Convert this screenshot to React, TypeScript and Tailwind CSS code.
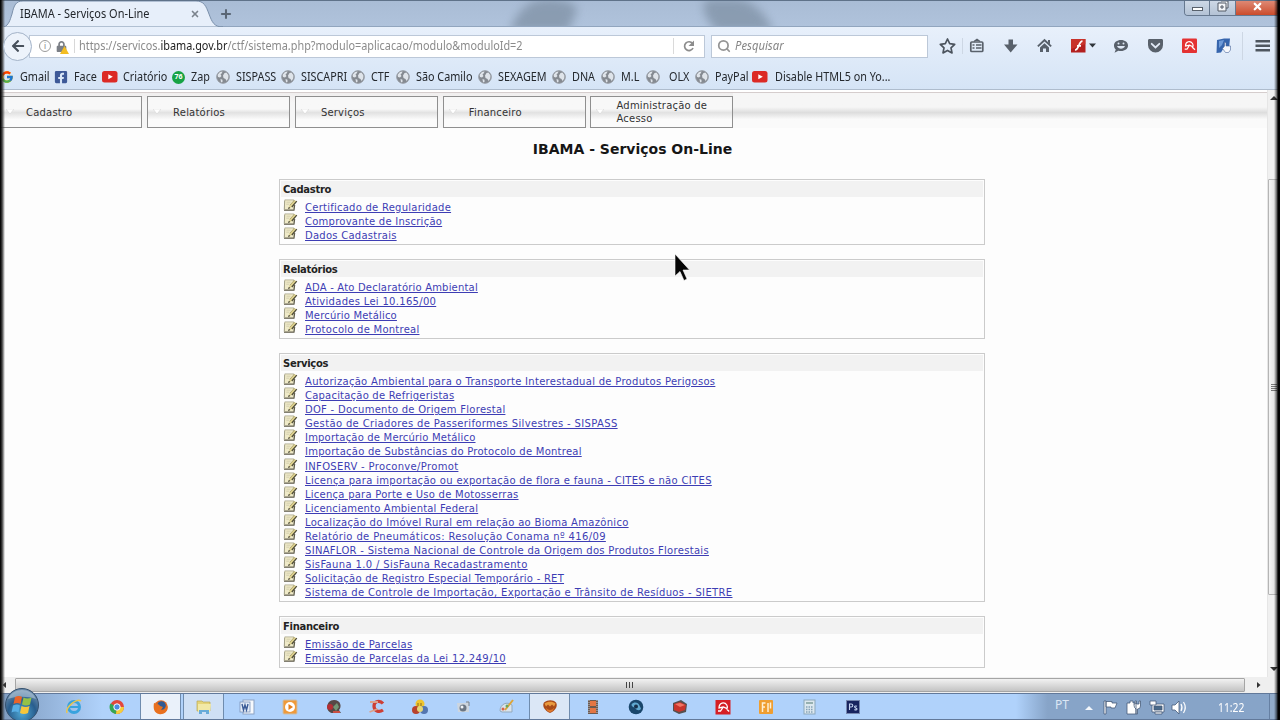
import React from "react";
import { FaArrowLeft, FaLock, FaFacebookSquare } from "react-icons/fa";
import { FcGoogle } from "react-icons/fc";
import { Search, Plus, X } from "lucide-react";

type Mark = { label: string; icon: "google" | "face" | "tube" | "zap" | "globe"; w: string; gap?: string };

const bookmarks: Mark[] = [
  { label: "Gmail", icon: "google", w: "w-[54px]" },
  { label: "Face", icon: "face", w: "w-[48px]" },
  { label: "Criatório", icon: "tube", w: "w-[69px]", gap: "ml-px" },
  { label: "Zap", icon: "zap", w: "w-[45px]" },
  { label: "SISPASS", icon: "globe", w: "w-[65px]" },
  { label: "SISCAPRI", icon: "globe", w: "w-[70px]" },
  { label: "CTF", icon: "globe", w: "w-[45px]" },
  { label: "São Camilo", icon: "globe", w: "w-[82px]" },
  { label: "SEXAGEM", icon: "globe", w: "w-[74px]" },
  { label: "DNA", icon: "globe", w: "w-[49px]" },
  { label: "M.L", icon: "globe", w: "w-[45px]" },
  { label: "OLX", icon: "globe", w: "w-[49px]", gap: "ml-[3px]" },
  { label: "PayPal", icon: "globe", w: "w-[57px]" },
  { label: "Disable HTML5 on Yo...", icon: "tube", w: "w-[150px]", gap: "ml-[3px]" },
];

const menus = ["Cadastro", "Relatórios", "Serviços", "Financeiro", "Administração de Acesso"];

type Item = { text: string; tracking: string };
const plain = "tracking-[0.19px]";
const wide = "tracking-[0.25px]";
const wider = "tracking-[0.33px]";
const widest = "tracking-[0.36px]";

const sections: { title: string; h: string; items: Item[] }[] = [
  {
    title: "Cadastro",
    h: "h-[66px]",
    items: [
      { text: "Certificado de Regularidade", tracking: wide },
      { text: "Comprovante de Inscrição", tracking: wide },
      { text: "Dados Cadastrais", tracking: wide },
    ],
  },
  {
    title: "Relatórios",
    h: "h-[80px]",
    items: [
      { text: "ADA - Ato Declaratório Ambiental", tracking: plain },
      { text: "Atividades Lei 10.165/00", tracking: "tracking-[0.3px]" },
      { text: "Mercúrio Metálico", tracking: plain },
      { text: "Protocolo de Montreal", tracking: wide },
    ],
  },
  {
    title: "Serviços",
    h: "h-[249px]",
    items: [
      { text: "Autorização Ambiental para o Transporte Interestadual de Produtos Perigosos", tracking: "tracking-[0.3px]" },
      { text: "Capacitação de Refrigeristas", tracking: "tracking-[0.21px]" },
      { text: "DOF - Documento de Origem Florestal", tracking: "tracking-[0.27px]" },
      { text: "Gestão de Criadores de Passeriformes Silvestres - SISPASS", tracking: "tracking-[0.35px]" },
      { text: "Importação de Mercúrio Metálico", tracking: plain },
      { text: "Importação de Substâncias do Protocolo de Montreal", tracking: wide },
      { text: "INFOSERV - Proconve/Promot", tracking: wider },
      { text: "Licença para importação ou exportação de flora e fauna - CITES e não CITES", tracking: "tracking-[0.32px]" },
      { text: "Licença para Porte e Uso de Motosserras", tracking: wide },
      { text: "Licenciamento Ambiental Federal", tracking: plain },
      { text: "Localização do Imóvel Rural em relação ao Bioma Amazônico", tracking: "tracking-[0.3px]" },
      { text: "Relatório de Pneumáticos: Resolução Conama nº 416/09", tracking: widest },
      { text: "SINAFLOR - Sistema Nacional de Controle da Origem dos Produtos Florestais", tracking: "tracking-[0.3px]" },
      { text: "SisFauna 1.0 / SisFauna Recadastramento", tracking: widest },
      { text: "Solicitação de Registro Especial Temporário - RET", tracking: wide },
      { text: "Sistema de Controle de Importação, Exportação e Trânsito de Resíduos - SIETRE", tracking: "tracking-[0.35px]" },
    ],
  },
  {
    title: "Financeiro",
    h: "h-[52px]",
    items: [
      { text: "Emissão de Parcelas", tracking: "tracking-[0.3px]" },
      { text: "Emissão de Parcelas da Lei 12.249/10", tracking: wider },
    ],
  },
];

function Globe() {
  return (
    <svg width="14" height="14" viewBox="0 0 14 14">
      <circle cx="7" cy="7" r="6.5" fill="#858a91" />
      <path d="M1.500 5 3.500 2.200 6.500 1.200 6 3 4.500 4.500 5.500 6 4 7.500 2 7zM8.500 3 10.500 2.600 12.600 5.500 12.300 8.500 10.500 11 9.500 9 7.500 8 7 5.500zM4.500 9 6.500 9.800 6.500 12 5 12.500z" fill="#dfe4ea" />
      <circle cx="7" cy="7" r="6.300" fill="none" stroke="#989ea6" strokeWidth=".8" />
    </svg>
  );
}

function MarkIcon({ kind }: { kind: Mark["icon"] }) {
  if (kind === "google") return <FcGoogle size={14} />;
  if (kind === "face") return <FaFacebookSquare size={14} color="#3d5998" />;
  if (kind === "tube")
    return (
      <svg width="16" height="12" viewBox="0 0 16 12">
        <rect width="15.500" height="11.500" rx="2.500" fill="#dc2a25" />
        <path d="M6.300 3.200v5l4.500-2.500z" fill="#fff" />
      </svg>
    );
  if (kind === "zap")
    return (
      <span className="ml-px flex h-[13px] w-[13px] items-center justify-center rounded-full bg-[#17a345] text-[7px] font-bold text-white">76</span>
    );
  return <Globe />;
}

function NoteIcon() {
  return (
    <svg width="15" height="12" viewBox="0 0 15 12" className="-mt-px shrink-0">
      <path d="M1.800.9h9v9.800H1.200z" fill="#efeac8" stroke="#aaa78d" strokeWidth=".8" />
      <path d="M1.500 2.500v7" stroke="#8b8870" strokeWidth="1" strokeDasharray="1 1" />
      <path d="M3.500 3.200h4M3.300 5.200h3" stroke="#cbc7a8" strokeWidth=".8" />
      <path d="M1 11.300h10L11.700 6" fill="none" stroke="#5d5a48" strokeWidth="1.100" />
      <path d="M5.500 9.500 6.800 6 11.500.9 13.700 2.400 8.800 8z" fill="#e0d490" />
      <path d="M8.800 8 13.800 2.200" stroke="#4b4836" strokeWidth="1.200" />
      <path d="m5 9.900.9-2 1.500 1z" fill="#2a2820" />
      <path d="M6.800 6.300 11.500 1" stroke="#93895a" strokeWidth=".6" />
    </svg>
  );
}

function Toolbar() {
  return (
    <svg width="350" height="36" viewBox="930 28 350 36" className="shrink-0">
      <path d="m947.500 39 2.200 4.700 5 .6-3.700 3.500 1 5.100-4.500-2.500-4.500 2.500 1-5.100-3.700-3.500 5-.6z" fill="none" stroke="#4c545e" strokeWidth="1.700" strokeLinejoin="round" />
      <path d="M962.500 38v16M1242.500 32v28" stroke="#cdd7e4" />
      <g fill="none" stroke="#59616b" strokeWidth="1.700">
        <rect x="970.800" y="42" width="12" height="9.500" rx="1" />
        <path d="m974 41.500 3-2.300 3 2.300M972.500 45h2m1.500 0h5.500M972.500 48h2m1.500 0h5.500" strokeWidth="1.300" />
      </g>
      <path d="M1008.500 39.500h4.500v5h4.500l-6.800 8-6.700-8h4.500z" fill="#59616b" />
      <path d="m1044.500 38.800 7.300 7-1.300 1.300-6-5.600-6 5.600-1.300-1.300zM1048 40h2v4l-2-2z" fill="#59616b" />
      <path d="m1044.500 43.200 4.500 4.200V52h-3v-3.500h-3V52h-3v-4.600z" fill="#59616b" />
      <rect x="1071" y="39" width="14.500" height="13.500" fill="#b3201f" />
      <path d="M1071 39h14.500v5l-14.500 5z" fill="#d23c31" opacity=".7" />
      <path d="M1082.500 41.200c-4 0-3.500 9-7.500 8.800M1077 45.800h4" stroke="#fff" strokeWidth="1.700" fill="none" />
      <path d="M1089 43.500h7l-3.500 4z" fill="#30353b" />
      <path d="M1121 40c4 0 7 2.300 7 5.500s-3 5.500-7 5.500c-1 0-1.800-.1-2.600-.3l-3.900 2 1.300-3.200c-1.200-1-1.800-2.400-1.800-4 0-3.200 3-5.500 7-5.500z" fill="#59616b" />
      <path d="M1117 46c1.500 3.500 6.500 3.500 8 0z" fill="#dfe8f5" />
      <circle cx="1118.500" cy="43.500" r="1" fill="#dfe8f5" />
      <circle cx="1123.500" cy="43.500" r="1" fill="#dfe8f5" />
      <path d="M1149.500 39h12c1 0 1.500.6 1.500 1.500v4.500a7.500 7.500 0 0 1-15 0v-4.500c0-.9.500-1.500 1.500-1.500z" fill="#59616b" />
      <path d="m1151.700 43.800 3.800 3.600 3.800-3.600" fill="none" stroke="#e3ebf7" strokeWidth="1.800" strokeLinecap="round" />
      <rect x="1182" y="38.500" width="15" height="14.500" rx="1" fill="#e43232" />
      <path d="M1185.500 46c0-5 5-5.500 7-2.500.8 1.200.8 2.200.3 3.200l-3.300-1.500zM1189.300 45.500l-2.300 3.700h-2.300M1192 47l3 2.800" fill="none" stroke="#fff" strokeWidth="1.200" />
      <path d="m1217 40 7-1.500h6l-1 10-3 2-2-3-3 5-4.500.5z" fill="#3665ad" />
      <path d="m1219 41 5-1-2 5-3 3z" fill="#6f9bd8" />
      <path d="M1224.500 46v-3.500h1.500V46h4.500v4l-2 2.500h-3l-3-4 1-1z" fill="#f6f8fc" stroke="#49669a" strokeWidth=".6" />
      <path d="M1255.500 41.200h14.500M1255.500 45.700h14.500M1255.500 50.200h14.500" stroke="#4e565f" strokeWidth="2.400" />
    </svg>
  );
}

function Browser() {
  return (
    <>
      <header className="flex h-[27px] shrink-0 border-t border-[#5f7289] bg-linear-to-b from-[#a9bcd5] to-[#b0c3dc]">
        <div className="relative flex w-full">
          <svg width="1280" height="26" viewBox="0 0 1280 26" className="absolute top-0 left-0">
            <defs>
              <filter id="soft" x="-20%" y="-20%" width="140%" height="140%">
                <feGaussianBlur stdDeviation="5" />
              </filter>
            </defs>
            <path d="M510 30c6-17 16-32 38-32s33 8 28 14c-2 6-6 12-7 18zM706-2c-6 12 0 18 10 32h58c-10-18-18-28-34-32z" fill="#8496ab" opacity=".85" filter="url(#soft)" />
            <path d="M210 25.500h1070" stroke="#91a5be" />
            <path d="M4 26c5-2 6-7 8-13 2-9 4-13 11-13h173c8 0 10 5 13 13 3 8 5 13 14 13z" fill="#e7effa" stroke="#7b90ab" strokeWidth="1" />
          </svg>
          <div className="relative flex w-[205px] items-center pl-5 text-[12px] text-[#22262b]">
            <span className="w-[170px] origin-left scale-x-[0.913] whitespace-nowrap">IBAMA - Serviços On-Line</span>
            <X size={10} strokeWidth={4} color="#7b838d" className="shrink-0" />
          </div>
          <Plus size={14} strokeWidth={3.500} color="#5a6675" className="relative mt-[6px] ml-[14px]" />
          <div className="relative ml-auto flex h-[15px] overflow-hidden rounded-b-[4px] border border-t-0 border-[#66788f]">
            <div className="flex w-[25px] items-center justify-center border-r border-[#66788f] bg-linear-to-b from-[#cdd8e6] to-[#b3c2d5]">
              <span className="mt-px h-[4px] w-[11px] border border-[#59616c] bg-white" />
            </div>
            <div className="flex w-[26px] items-start justify-center border-r border-[#66788f] bg-linear-to-b from-[#cdd8e6] to-[#b3c2d5]">
              <svg width="12" height="12" viewBox="0 0 12 12">
                <path d="M4 0h7v7H9M1 2h8v8H1zM4 5h2v2H4z" fill="#f5f7fa" stroke="#505965" />
              </svg>
            </div>
            <div className="flex w-[43px] items-start justify-center bg-linear-to-b from-[#dd8873] to-[#cb4b2a]">
              <X size={11} strokeWidth={5} color="#fff" />
            </div>
          </div>
        </div>
      </header>
      <div className="flex h-[63px] shrink-0 flex-col border-b border-[#aebccd] bg-linear-to-b from-[#e8f0fb] to-[#d5e4f6]">
        <div className="flex h-[37px] items-center">
          <div className="relative z-10 mt-px ml-[3px] flex h-[29px] w-[29px] items-center justify-center rounded-full border border-[#a3b3c8] bg-[#edf3fb]">
            <FaArrowLeft size={14} color="#48515c" />
          </div>
          <div className="mt-px -ml-[3px] flex h-[23px] w-[676px] items-center border border-[#bcc8d8] bg-white text-[12px]">
            <span className="ml-[9px] flex h-[12px] w-[12px] items-center justify-center rounded-full border border-[#9a9a9a] text-[8px] text-[#808080]">i</span>
            <span className="relative ml-[5px]">
              <FaLock size={11} color="#7b7f86" />
              <svg width="9" height="8" viewBox="0 0 9 8" className="absolute top-[5px] left-[4px]">
                <path d="M4.500 0 9 8H0z" fill="#f3bd22" />
              </svg>
            </span>
            <span className="ml-[7px] h-[14px] w-px bg-[#d8d8d8]" />
            <span className="ml-[4px] w-[500px] origin-left scale-x-[0.905] whitespace-nowrap text-[#8b8b8b]">
              https://servicos.<span className="text-[#222]">ibama.gov.br</span>/ctf/sistema.php?modulo=aplicacao/modulo&amp;moduloId=2
            </span>
            <span className="ml-auto h-[16px] w-px bg-[#dadada]" />
            <svg width="30" height="16" viewBox="0 0 30 16">
              <path d="M18.500 5.500A4.400 4.400 0 1 0 19 10" fill="none" stroke="#8c8c8c" strokeWidth="1.700" />
              <path d="M20 2.500V8h-5.500z" fill="#8c8c8c" />
            </svg>
          </div>
          <div className="mt-px ml-[6px] flex h-[23px] w-[217px] items-center border border-[#bcc8d8] bg-white text-[12px] text-[#858585] italic">
            <Search size={14} strokeWidth={3} color="#959595" className="mr-[4px] ml-[5px]" />
            <span className="origin-left scale-x-[0.94]">Pesquisar</span>
          </div>
          <div className="mt-px ml-[2px]">
            <Toolbar />
          </div>
        </div>
        <nav className="flex h-[26px] items-center pt-px text-[12px] text-[#24282d]">
          {bookmarks.map((b) => (
            <div key={b.label} className={`flex shrink-0 items-center whitespace-nowrap ${b.w}`}>
              <span className="flex w-[20px] shrink-0">
                <MarkIcon kind={b.icon} />
              </span>
              <span className={`origin-left scale-x-[0.9] ${b.gap ?? ""}`}>{b.label}</span>
            </div>
          ))}
        </nav>
      </div>
    </>
  );
}

function Page() {
  return (
    <main className="flex h-[587px] w-[1267px] shrink-0 flex-col bg-[#fdfdfd] font-['DejaVu_Sans','Verdana',sans-serif] text-[10px]">
      <div className="h-[2px] shrink-0 bg-white" />
      <div className="flex h-[36px] shrink-0 gap-[4.800px] border-t border-[#d5cdcd] bg-linear-to-b from-[#f0eeee] from-0% via-[#f6f6f6] via-30% to-[#f6f6f6] to-45% pt-[3px]">
        {menus.map((m, i) => (
          <div key={m} className={`flex h-[32px] items-center border border-[#8f8f8f] bg-linear-to-b from-[#f8f8f8] from-40% via-[#e2e2e2] via-52% to-[#fbfbfb] to-75% text-[#333] ${i ? "w-[143px]" : "w-[142.300px]"}`}>
            <svg width="8" height="6" viewBox="0 0 8 6" className="ml-[5px]">
              <path d="M0 0h8L4 5z" fill="#fff" stroke="#d0d0d0" strokeWidth=".5" />
            </svg>
            <span className="ml-[12px] w-[108px] leading-[13px] tracking-[0.2px]">{m}</span>
          </div>
        ))}
        <div className="-mt-[3px] -ml-[4.800px] flex-1 bg-linear-to-b from-[#f6f6f6] from-40% via-[#dddddd] via-56% to-[#fafafa] to-75%" />
      </div>
      <h1 className="mt-[11px] mr-[2px] h-[20px] text-center text-[14px] leading-[20px] font-bold text-[#161616]">IBAMA - Serviços On-Line</h1>
      <div className="mt-[20px] ml-[279px] flex w-[706px] flex-col gap-[14px]">
        {sections.map((s) => (
          <section key={s.title} className={`border border-[#cbcbcb] bg-[#fdfdfd] p-px ${s.h}`}>
            <h2 className="h-[16px] bg-[#f2f2f2] pl-[2px] text-[10px] leading-[17px] font-bold tracking-[-0.3px] text-[#222]">{s.title}</h2>
            <ul className="mt-[3px]">
              {s.items.map((t) => (
                <li key={t.text} className="flex h-[14.100px] pl-[2px]">
                  <NoteIcon />
                  <a className={`ml-[7px] text-[10px] leading-[15px] whitespace-nowrap text-[#3d3db4] underline ${t.tracking}`}>{t.text}</a>
                </li>
              ))}
            </ul>
          </section>
        ))}
      </div>
    </main>
  );
}

const tasks: { slot?: string; art: React.ReactNode }[] = [
  { art: <><circle cx="9" cy="9" r="5.500" fill="none" stroke="#39a3de" strokeWidth="3" /><path d="M5 9h9" stroke="#39a3de" strokeWidth="2" /><path d="M2 15C0 9 12 0 16 3" fill="none" stroke="#e8c550" strokeWidth="1.500" /></> },
  { art: <><circle cx="9" cy="9" r="7" fill="#e3473b" /><path d="M9 9 2.500 5.500A7 7 0 0 0 8 16z" fill="#35a652" /><path d="M9 9h7a7 7 0 0 1-8 7z" fill="#f4cf3a" /><circle cx="9" cy="9" r="3.200" fill="#4b8be0" stroke="#fff" /></> },
  { slot: "border-x border-[#6f8cae] bg-[#eaf1fa]", art: <><circle cx="9" cy="9" r="6.800" fill="#e26a1f" /><circle cx="9.500" cy="7.500" r="4.300" fill="#315a93" /><path d="M2 5c3 1 5 1 6 3l3 1-2 3c3 1 4-1 6-5 2 7-4 10-8 9-5-1-6-6-5-11z" fill="#e9711f" /></> },
  { slot: "border-x border-[#6f8cae] bg-[#cfe0f5]", art: <><path d="M2 3h5l1 1h7v9H2z" fill="#e5d478" stroke="#b7a657" strokeWidth=".7" /><path d="M3 6h13l-1 8H3z" fill="#f2e9a6" /><path d="M4 16v-4h10v4h-3v-2H7v2z" fill="#68abd8" /></> },
  { art: <><rect x="5" y="2" width="11" height="14" fill="#f6f9fd" stroke="#8ca2c3" /><rect x="2" y="4" width="10" height="10" fill="#e4ecf7" stroke="#7c93b8" strokeWidth=".8" /><path d="m4 6 1.500 6L7 7l1.500 5L10 6" fill="none" stroke="#3c5c97" strokeWidth="1.400" /></> },
  { art: <><rect x="2" y="2" width="14" height="14" rx="1" fill="#ef9a3a" stroke="#c9bfae" /><circle cx="9" cy="9" r="5" fill="#fff" /><path d="M7.500 6v6l4.500-3z" fill="#e57c18" /></> },
  { art: <><path d="M9 2c7 0 8 7 5 10l2 3H9C0 16 0 2 9 2z" fill="#574846" /><circle cx="5" cy="9" r="3" fill="#b52e35" /><path d="m8 9 4-4 2 4-3 4z" fill="#739776" /><path d="M8 14h7" stroke="#c84f45" strokeWidth="2" /></> },
  { art: <><path d="M15 5.500C12 2 6 3 6 8s5 7 9 4" fill="none" stroke="#cd3f35" strokeWidth="3.200" /><path d="M2 4h8M1.500 14l8-3" stroke="#dca08a" strokeWidth="1.800" /></> },
  { art: <><circle cx="9" cy="6" r="4.500" fill="#efc52e" /><circle cx="5" cy="12" r="4" fill="#b8422d" /><circle cx="13" cy="12" r="4" fill="#5476b0" /><circle cx="9" cy="11" r="3" fill="#e5d878" /><path d="M7 5v3m3-3v3" stroke="#876a20" /></> },
  { art: <><path d="M3 5h8l4-2v11H4z" fill="#cdd5de" /><circle cx="9" cy="10" r="3.500" fill="#6b7684" /><circle cx="8" cy="9" r="1.500" fill="#eef3f8" /><path d="M12 4h3v4" stroke="#75808e" fill="none" /></> },
  { art: <><path d="M2 13c0-7 7-10 12-6v7H4z" fill="#d9e3ec" stroke="#93a9bd" /><path d="m7 12 8-10" stroke="#dda537" strokeWidth="2" /><circle cx="5" cy="11" r="1.500" fill="#d5634e" /><circle cx="9" cy="8" r="1.500" fill="#68a661" /></> },
  { slot: "border-x border-[#6f8cae] bg-[#dbe7f6]", art: <><path d="M3 4.500c4-3 9-3 12 0 2 3 0 8-6 10.500-6-2.500-8-7.500-6-10.500z" fill="#a94a18" /><path d="M3.500 5.500c3-2.500 8-2.500 11 0l-1.500 3-2-2-2 2-2-2-2 2z" fill="#e99a3e" /><path d="M4.500 9.500q4.500 5 9 0l-2 3.500-2.500 1.200L6.500 13z" fill="#e07b2c" /></> },
  { art: <><rect x="4" y="2" width="10" height="14" fill="#6d5a50" /><path d="M6 3h6v5H6zM6 10h6v5H6z" fill="#e47644" /><path d="M5 2v14M13 2v14" stroke="#bac2cd" strokeDasharray="1 1" /></> },
  { art: <><circle cx="9" cy="9" r="7.300" fill="#19466b" /><path d="M4.500 6.500c3-3.500 7-1.500 8 1s2 3 1 4-4 1-5-1-4-1-4-4z" fill="#60a8cf" /><circle cx="9" cy="8.500" r="2" fill="#17314b" /></> },
  { art: <><path d="m2 5 8-3 6 4-1 8-7 2-6-3z" fill="#55504f" /><path d="m3 6 6-2 6 3-1 5-6 2-5-2z" fill="#c9352c" /><path d="m4 6 5-1 5 2-5 2z" fill="#f17563" /></> },
  { art: <><rect x="1.500" y="2" width="15" height="14.500" fill="#d51f24" /><path d="M5 10c0-5.500 5.500-6.500 7.800-3 .8 1.300.7 2.500.2 3.600L9.300 9zM9.300 9 6.500 13H4M12.500 11l2.700 2.500" fill="none" stroke="#fff" strokeWidth="1.300" /></> },
  { art: <><rect x="2" y="2" width="14" height="14" rx="1" fill="#ef9e31" /><path d="M5.500 14V5H8.500M5.500 9H8m3-4v9M13.500 4.500v6" fill="none" stroke="#fff0d4" strokeWidth="1.500" /></> },
  { art: <><rect x="4" y="2" width="11" height="14" fill="#dce8ef" stroke="#8ba7bb" /><path d="M6 4h7v2H6z" fill="#96b0b0" /><path d="M6 9h7M6 11.500h7M6 14h7" stroke="#86a2b8" strokeWidth="1.300" strokeDasharray="1.500 1" /></> },
  { art: <><rect x="2.500" y="2.500" width="13" height="13" fill="#18245f" stroke="#7687ae" /><path d="M5.500 12V6h1.700q1.600 0 1.600 1.500T7.200 9H5.500M13 8.300c-2-.8-3 .3-2 1.200s2 .5 2 1.500-1.500 1.200-2.600.5" fill="none" stroke="#c4d2f0" strokeWidth="1.100" /></> },
];

function Taskbar() {
  return (
    <footer className="relative flex h-[27px] shrink-0 items-stretch border-t border-b border-[#62799a] bg-linear-to-r from-[#7d9abe] via-[#b0d2fb] via-8% to-[#b0d2fb]">
      <svg width="38" height="34" viewBox="0 0 38 34" className="absolute -top-[7px] left-[3px]">
        <defs>
          <radialGradient id="orb" cx=".5" cy=".75" r=".7">
            <stop offset="0" stopColor="#4fa9d6" />
            <stop offset=".6" stopColor="#285d8d" />
            <stop offset="1" stopColor="#6c8cab" />
          </radialGradient>
        </defs>
        <circle cx="19" cy="18" r="16.500" fill="url(#orb)" stroke="#36526f" />
        <path d="M5 12C10 0 28 0 33 12c-8-3-20-3-28 0z" fill="#c7d9e6" opacity=".5" />
        <path d="M12 10q4-2 7 0l-1.500 7q-3-2-7 0z" fill="#e9642a" />
        <path d="M20.500 10.500q4 2 8 0L27 17.500q-4 2-8 0z" fill="#94c246" />
        <path d="M10 18.500q4-2 7 0l-1.500 7q-3-2-7 0z" fill="#57aee5" />
        <path d="M18.500 19q4 2 8 0L25 26q-4 2-8 0z" fill="#f7c63a" />
      </svg>
      <div className="ml-[52.500px] flex">
        {tasks.map((t, i) => (
          <div key={i} className="flex w-[43.250px] justify-center">
            <div className={`flex w-[41px] items-center justify-center ${t.slot ?? ""}`}>
              <svg width="18" height="18" viewBox="0 0 18 18">{t.art}</svg>
            </div>
          </div>
        ))}
      </div>
      <div className="ml-auto flex w-[264px] items-center bg-linear-to-r from-[#b0d2fb] to-[#87a4c8] to-12% text-[12px] text-white">
        <span className="mb-[3px] ml-[39px] w-[29px] text-[#dce7f5]">PT</span>
        <svg width="110" height="22" viewBox="0 0 110 22">
          <path d="m1 14 4-4 4 4z" fill="#f3f7fc" />
          <g fill="#fff" stroke="#465c79" strokeWidth=".8">
            <path d="M20 5h2v13h-2zM22 5.500h6v1.500h5l-2 5h-4v-1h-5z" />
            <path d="M43 7h3V5h3v2h3v11h-9zM50 8h1V5h1.500v3H55V5h1.500v5q0 3-3 3v5H52v-5q-2-1-2-4z" />
            <path d="M68 8h12v8H68z" />
            <path d="M70 10h8v4h-8z" fill="#496989" />
            <path d="M66 5h6v4h-6zM71 18h7v-2h-7z" />
            <path d="M88 9h3l4-4v13l-4-4h-3z" />
          </g>
          <path d="M97 8q2 3.500 0 7M99.500 6q3.500 5.500 0 11" fill="none" stroke="#fff" strokeWidth="1.200" />
        </svg>
        <span className="mt-[2px] ml-[24px] origin-left scale-x-[0.86]">11:22</span>
        <span className="ml-auto h-full w-[11px] border-l border-[#6680a3] bg-[#91abca]" />
      </div>
    </footer>
  );
}

export default function App() {
  return (
    <div className="relative flex h-[720px] w-[1280px] flex-col overflow-hidden bg-[#fdfdfd] font-['Noto_Sans','Open_Sans',sans-serif]">
      <Browser />
      <div className="flex h-[587px] shrink-0">
        <Page />
        <div className="flex w-[13px] flex-col items-center border-l border-[#e6e6e6] bg-[#f0f0f0] pt-[6px]">
          <svg width="8" height="5" viewBox="0 0 8 5">
            <path d="m0 4 4-4 4 4z" fill="#333" />
          </svg>
          <div className="mt-[78px] flex h-[416px] w-full flex-col items-center justify-center gap-px rounded-[1px] border border-[#b5b5b5] bg-linear-to-r from-[#f4f4f4] to-[#d5d5d5]">
            <i className="h-px w-[6px] bg-[#777]" />
            <i className="h-px w-[6px] bg-[#777]" />
            <i className="h-px w-[6px] bg-[#777]" />
            <i className="h-px w-[6px] bg-[#777]" />
          </div>
          <svg width="8" height="5" viewBox="0 0 8 5" className="mt-[72px]">
            <path d="m0 0 4 4 4-4z" fill="#333" />
          </svg>
        </div>
      </div>
      <div className="flex h-[16px] shrink-0 items-center bg-[#efefef]">
        <svg width="15" height="8" viewBox="0 0 15 8" className="shrink-0">
          <path d="M6 1v6L2.500 4z" fill="#333" />
        </svg>
        <div className="flex h-[14px] w-[1230px] items-center justify-center gap-[2px] rounded-[1px] border border-[#a5a5a5] bg-linear-to-b from-[#f2f2f2] to-[#c4c4c4]">
          <i className="h-[6px] w-px bg-[#444]" />
          <i className="h-[6px] w-px bg-[#444]" />
          <i className="mr-[2px] h-[6px] w-px bg-[#444]" />
        </div>
        <svg width="8" height="8" viewBox="0 0 8 8" className="ml-[10px]">
          <path d="M2 1v6l3.500-3z" fill="#333" />
        </svg>
      </div>
      <Taskbar />
      <svg width="18" height="30" viewBox="0 0 18 30" className="absolute top-[252px] left-[673px]">
        <path d="M2 2v22l5-4.500 4 9 3-1.500-4-9h6.500z" fill="#050505" stroke="#fff" strokeWidth=".6" />
      </svg>
      <div className="absolute inset-y-0 left-0 w-[5px] bg-linear-to-r from-black via-[#333]/80 to-transparent" />
      <div className="absolute inset-y-0 right-0 w-[6px] bg-linear-to-l from-black from-35% via-black/60 to-transparent" />
    </div>
  );
}
